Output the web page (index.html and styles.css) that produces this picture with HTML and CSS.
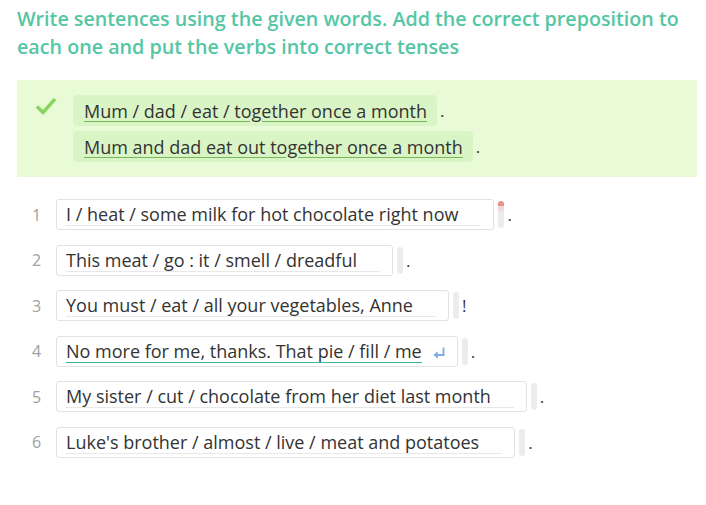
FILE: index.html
```html
<!DOCTYPE html>
<html>
<head>
<meta charset="utf-8">
<link rel="stylesheet" href="styles.css">
</head>
<body>
<h1 class="title">Write sentences using the given words. Add the correct preposition to each one and put the verbs into correct tenses</h1>
<div class="example">
  <svg class="check" width="22" height="18" viewBox="0 0 22 18"><path d="M2 9.5 L8 15.5 L20 2" fill="none" stroke="#86d45e" stroke-width="3.4" stroke-linejoin="miter"/></svg>
  <div class="ex-lines">
    <div class="ex-line"><span class="chip"><span class="chip-text">Mum / dad / eat / together once a month</span></span><span class="punct">.</span></div>
    <div class="ex-line"><span class="chip"><span class="chip-text">Mum and dad eat out together once a month</span></span><span class="punct">.</span></div>
  </div>
</div>
<ol class="items">
  <li class="item"><span class="num">1</span><span class="box"><span class="txt">I / heat / some milk for hot chocolate right now</span></span><span class="pill pill-red"></span><span class="punct">.</span></li>
  <li class="item"><span class="num">2</span><span class="box"><span class="txt">This meat / go : it / smell / dreadful</span></span><span class="pill"></span><span class="punct">.</span></li>
  <li class="item"><span class="num">3</span><span class="box"><span class="txt">You must / eat / all your vegetables, Anne</span></span><span class="pill"></span><span class="punct">!</span></li>
  <li class="item"><span class="num">4</span><span class="box box-active"><span class="txt txt-active">No more for me, thanks. That pie / fill / me</span><svg class="enter" width="12" height="12" viewBox="0 0 12 12"><path d="M10.5 0.5 V8 H3" fill="none" stroke="#7fb0e6" stroke-width="1.9"/><path d="M0.3 8 L4.8 4.2 V11.8 Z" fill="#7fb0e6"/></svg></span><span class="pill"></span><span class="punct">.</span></li>
  <li class="item"><span class="num">5</span><span class="box"><span class="txt">My sister / cut / chocolate from her diet last month</span></span><span class="pill"></span><span class="punct">.</span></li>
  <li class="item"><span class="num">6</span><span class="box"><span class="txt">Luke's brother / almost / live / meat and potatoes</span></span><span class="pill"></span><span class="punct">.</span></li>
</ol>
</body>
</html>
```
FILE: styles.css
```css
body {
  margin: 0;
  padding: 5px 9px 0 17px;
  font-family: "Open Sans", "Noto Sans", sans-serif;
  color: #333;
  background: #fff;
}
.title {
  margin: 0;
  font-size: 19.7px;
  font-weight: 600;
  line-height: 28px;
  color: #55c6a4;
  width: 680px;
}
.example {
  margin-top: 19px;
  background: #e8fbd6;
  display: flex;
  align-items: flex-start;
  padding: 15px 0 15px 18px;
}
.check {
  margin-top: 2px;
  margin-right: 16px;
}
.ex-lines {
  display: flex;
  flex-direction: column;
  gap: 5px;
}
.ex-line {
  display: flex;
  align-items: center;
}
.chip {
  background: #d9f5c6;
  border-radius: 4px;
  padding: 0 10px 0 11px;
  height: 31px;
  display: flex;
  align-items: center;
}
.chip-text {
  font-size: 18px;
  line-height: 22px;
  text-decoration: underline;
  text-decoration-color: #79b85a;
  text-underline-offset: 3px;
  color: #333;
}
.punct {
  font-size: 17px;
  color: #333;
  margin-left: 3px;
}
.items {
  list-style: none;
  margin: 22px 0 0 0;
  padding: 0;
  display: flex;
  flex-direction: column;
  gap: 14.5px;
}
.item {
  display: flex;
  align-items: center;
}
.num {
  width: 39px;
  font-size: 16px;
  color: #a0a0a0;
  text-align: center;
}
.box {
  display: flex;
  align-items: center;
  height: 29px;
  border: 1px solid #e2e2e2;
  border-radius: 3px;
  padding: 0 12px 0 9px;
  background: #fff;
}
.txt {
  font-size: 18px;
  line-height: 22px;
  padding-right: 23px;
  border-bottom: 1px solid #e8e8e8;
  color: #333;
}
.txt-active {
  padding-right: 0;
  border-bottom: 1px solid #3fb69a;
}
.enter {
  margin-left: 11px;
  margin-top: 3px;
}
.pill {
  width: 6px;
  height: 27px;
  border-radius: 3px;
  background: #ececec;
  margin-left: 4px;
}
.pill-red {
  background: linear-gradient(#eb8f8f 0 5px, #f1d6d6 5px 8px, #ececec 12px);
}
```
